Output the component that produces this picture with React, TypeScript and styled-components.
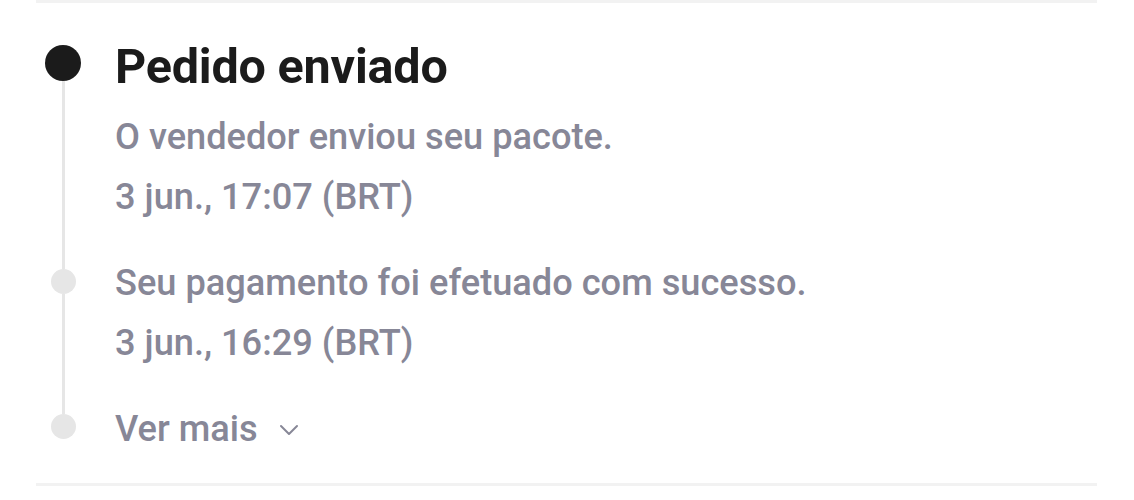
import React from 'react';
import styled, { createGlobalStyle } from 'styled-components';

const colors = {
  title: '#1b1b1b',
  muted: '#878797',
  track: '#e6e6e6',
  divider: '#f2f2f2',
  white: '#ffffff',
};

const GlobalStyle = createGlobalStyle`
  html, body {
    margin: 0;
    padding: 0;
    background: ${colors.white};
  }
  body {
    font-family: Roboto, "Noto Sans", "Liberation Sans", sans-serif;
    -webkit-font-smoothing: antialiased;
  }
`;

const Panel = styled.section`
  margin: 0 37px 0 36px;
  border-top: 3px solid ${colors.divider};
  border-bottom: 3px solid ${colors.divider};
  padding-bottom: 25px;
`;

const Row = styled.div`
  display: grid;
  grid-template-columns: 54px 1fr;
  column-gap: 25px;
`;

const Marker = styled.div`
  display: flex;
  flex-direction: column;
  align-items: center;
`;

const Segment = styled.div<{ $hidden?: boolean; $height?: number }>`
  width: 3px;
  background: ${(p) => (p.$hidden ? 'transparent' : colors.track)};
  ${(p) => (p.$height !== undefined ? `height: ${p.$height}px;` : 'flex: 1;')}
`;

const Dot = styled.div<{ $active?: boolean }>`
  flex: none;
  width: ${(p) => (p.$active ? 36 : 25)}px;
  height: ${(p) => (p.$active ? 36 : 25)}px;
  border-radius: 50%;
  background: ${(p) => (p.$active ? colors.title : colors.track)};
`;

const Content = styled.div<{ $top: number }>`
  padding-top: ${(p) => p.$top}px;
`;

const Title = styled.h2`
  margin: 0 0 12px;
  font-size: 48.5px;
  line-height: 56px;
  font-weight: 700;
  color: ${colors.title};
  letter-spacing: -0.2px;
`;

const Line = styled.p`
  margin: 0;
  font-size: 36.2px;
  line-height: 60px;
  font-weight: 500;
  color: ${colors.muted};
`;

const More = styled.button`
  display: flex;
  align-items: center;
  gap: 21px;
  height: 60px;
  padding: 0;
  border: 0;
  background: none;
  font-family: inherit;
  font-size: 36.2px;
  font-weight: 500;
  color: ${colors.muted};
  cursor: pointer;

  svg {
    margin-top: 4px;
  }
`;

const Chevron = () => (
  <svg width="20" height="12" viewBox="0 0 20 12" fill="none">
    <path d="M2 2l8 8 8-8" stroke={colors.muted} strokeWidth="2" strokeLinecap="round" strokeLinejoin="round" />
  </svg>
);

export default function App() {
  return (
    <>
      <GlobalStyle />
      <Panel>
        <Row>
          <Marker>
            <Segment $hidden $height={42} />
            <Dot $active />
            <Segment />
          </Marker>
          <Content $top={36}>
            <Title>Pedido enviado</Title>
            <Line>O vendedor enviou seu pacote.</Line>
            <Line>3 jun., 17:07 (BRT)</Line>
          </Content>
        </Row>
        <Row>
          <Marker>
            <Segment $height={42} />
            <Dot />
            <Segment />
          </Marker>
          <Content $top={26}>
            <Line>Seu pagamento foi efetuado com sucesso.</Line>
            <Line>3 jun., 16:29 (BRT)</Line>
          </Content>
        </Row>
        <Row>
          <Marker>
            <Segment $height={41} />
            <Dot />
            <Segment $hidden />
          </Marker>
          <Content $top={25}>
            <More>
              Ver mais
              <Chevron />
            </More>
          </Content>
        </Row>
      </Panel>
    </>
  );
}
